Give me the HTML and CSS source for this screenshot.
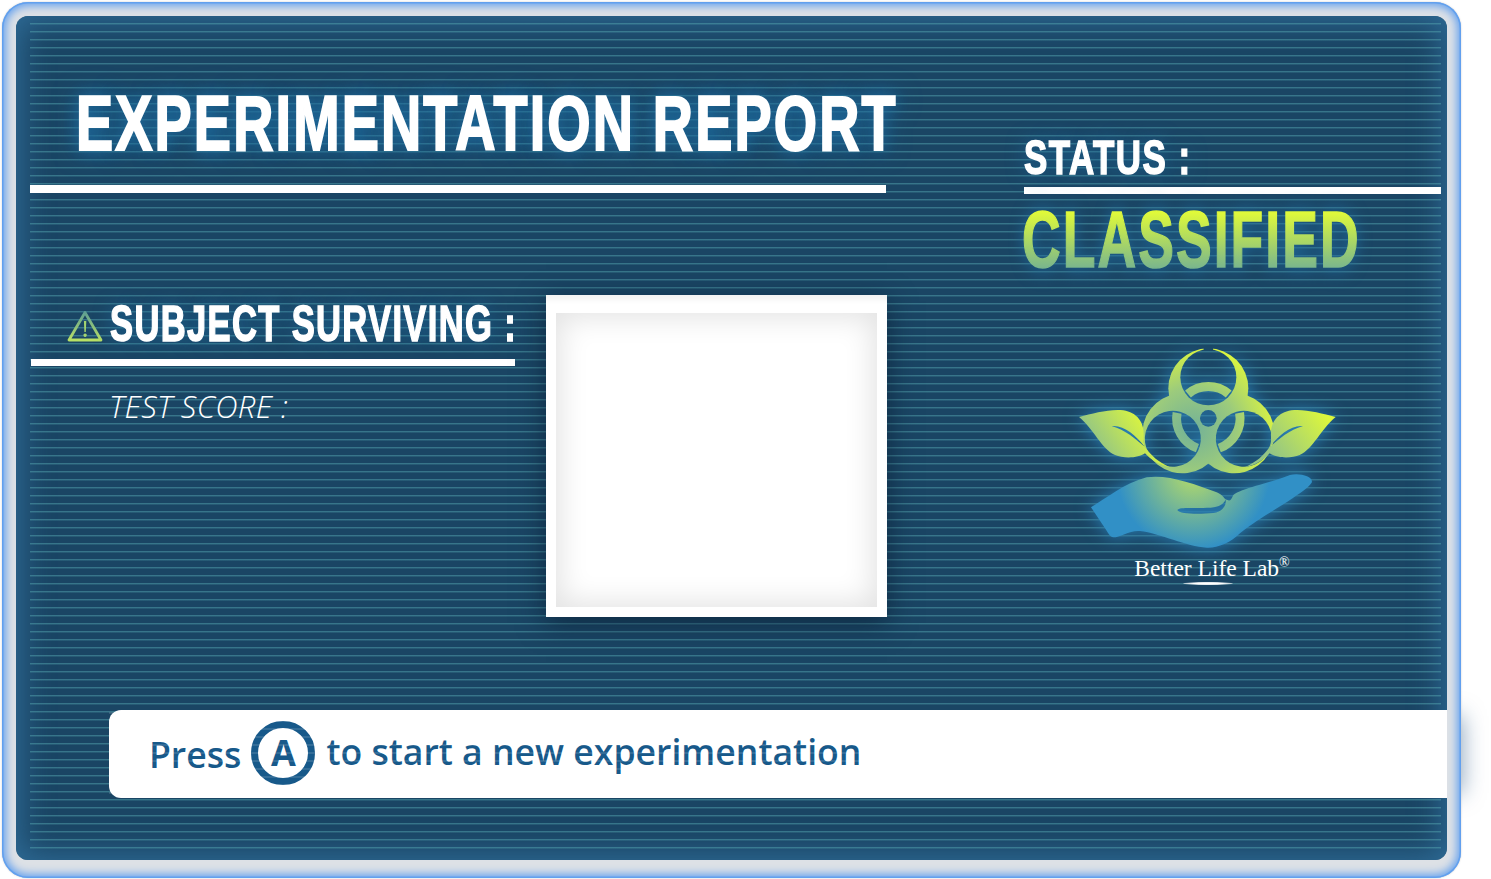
FILE: index.html
```html
<!DOCTYPE html>
<html lang="en">
<head>
<meta charset="utf-8">
<title>Experimentation Report</title>
<link rel="stylesheet" href="styles.css">
</head>
<body>
<div class="frame">
  <div class="panel">
    <div class="columns">
      <section class="left-col">
        <h1 class="title"><span class="squeeze title-text">EXPERIMENTATION REPORT</span></h1>
        <div class="rule title-rule"></div>
        <div class="subject-row">
          <div class="subject">
            <div class="subject-head">
              <svg class="warn" viewBox="0 0 36 32" aria-hidden="true">
                <defs><linearGradient id="warnGrad" x1="0" y1="0" x2="0" y2="1"><stop offset="0" stop-color="#5f9f92"/><stop offset="1" stop-color="#b9e064"/></linearGradient></defs>
                <path d="M18 2.5 L34 30 H2 Z" fill="none" stroke="url(#warnGrad)" stroke-width="2.8" stroke-linejoin="round"/>
                <path d="M16.9 11 H19.3 L18.8 22 H17.4 Z M18.1 23.5 a1.7 1.7 0 1 0 .01 0 Z" fill="#a4d470"/>
              </svg>
              <h2 class="subject-title"><span class="squeeze subject-text">SUBJECT SURVIVING :</span></h2>
            </div>
            <div class="rule subject-rule"></div>
            <p class="score">TEST SCORE :</p>
          </div>
          <div class="photo"><div class="photo-inner"></div></div>
        </div>
      </section>
      <aside class="right-col">
        <div class="status"><span class="squeeze status-text">STATUS :</span></div>
        <div class="rule status-rule"></div>
        <div class="classified"><span class="squeeze classified-text">CLASSIFIED</span></div>
        <div class="logo">
          <svg class="logo-art" viewBox="0 0 870 680" aria-hidden="true">
            <defs>
              <radialGradient id="bioGrad" gradientUnits="userSpaceOnUse" cx="400" cy="300" r="260">
                <stop offset="0" stop-color="#72b198"/><stop offset=".5" stop-color="#9ccb7c"/><stop offset="1" stop-color="#e0f83a"/>
              </radialGradient>
              <linearGradient id="leafL" gradientUnits="userSpaceOnUse" x1="110" y1="350" x2="250" y2="255">
                <stop offset="0" stop-color="#93c585"/><stop offset="1" stop-color="#ddf73c"/>
              </linearGradient>
              <linearGradient id="leafR" gradientUnits="userSpaceOnUse" x1="250" y1="370" x2="90" y2="250">
                <stop offset="0" stop-color="#93c585"/><stop offset="1" stop-color="#ddf73c"/>
              </linearGradient>
              <radialGradient id="handGrad" gradientUnits="userSpaceOnUse" cx="400" cy="430" r="230">
                <stop offset="0" stop-color="#b8dd66"/><stop offset="1" stop-color="#3190c6"/>
              </radialGradient>
              <mask id="bioMask" maskUnits="userSpaceOnUse" x="0" y="0" width="870" height="680">
                <g fill="#fff">
                  <circle cx="445" cy="175" r="120"/>
                  <circle cx="445" cy="175" r="120" transform="rotate(120 445 265)"/>
                  <circle cx="445" cy="175" r="120" transform="rotate(240 445 265)"/>
                </g>
                <g fill="#000">
                  <circle cx="445" cy="142" r="84"/>
                  <circle cx="445" cy="142" r="84" transform="rotate(120 445 265)"/>
                  <circle cx="445" cy="142" r="84" transform="rotate(240 445 265)"/>
                  <circle cx="445" cy="265" r="25"/>
                  <rect x="431" y="50" width="28" height="20"/>
                </g>
                <g fill="none" stroke="#fff" stroke-width="27">
                  <path d="M384 192 A95 95 0 0 1 506 192"/>
                  <path d="M384 192 A95 95 0 0 1 506 192" transform="rotate(120 445 265)"/>
                  <path d="M384 192 A95 95 0 0 1 506 192" transform="rotate(240 445 265)"/>
                </g>
              </mask>
              <mask id="handMask" maskUnits="userSpaceOnUse" x="0" y="400" width="870" height="280">
                <rect x="0" y="400" width="870" height="280" fill="#fff"/>
                <path d="M352 540 C360 529 420 538 462 532 C480 529 492 522 497 508 C500 530 484 547 460 549 C420 553 358 553 352 540 Z" fill="#000"/>
              </mask>
              <mask id="leafMask" maskUnits="userSpaceOnUse" x="0" y="200" width="460" height="240">
                <rect x="0" y="200" width="460" height="240" fill="#fff"/>
                <path d="M155 288 C190 284 228 315 254 350 C226 326 196 300 155 288 Z" fill="#000"/>
              </mask>
            </defs>
            <rect x="0" y="0" width="870" height="680" fill="url(#bioGrad)" mask="url(#bioMask)"/>
            <path mask="url(#leafMask)" fill="url(#leafL)" d="M57 261 C100 250 150 236 190 241 C230 248 254 275 251 320 C250 335 252 345 258 355 C272 375 295 397 330 412 C295 406 272 388 255 370 C235 385 190 386 165 375 C125 358 100 295 57 261 Z"/>
            <g transform="translate(884 0) scale(-1 1)">
              <path mask="url(#leafMask)" fill="url(#leafR)" d="M57 261 C100 250 150 236 190 241 C230 248 254 275 251 320 C250 335 252 345 258 355 C272 375 295 397 330 412 C295 406 272 388 255 370 C235 385 190 386 165 375 C125 358 100 295 57 261 Z"/>
            </g>
            <path mask="url(#handMask)" fill="url(#handGrad)" d="M93 532 C140 505 190 460 260 442 C320 432 400 460 470 487 C488 494 492 506 497 508 C510 515 512 512 520 495 C545 475 620 462 690 435 C720 428 762 440 755 458 C735 490 600 560 540 610 C510 640 470 655 440 653 C380 650 300 610 240 603 C210 600 180 622 160 622 C150 622 145 610 135 595 Z"/>
          </svg>
          <div class="brand">Better Life Lab<sup class="reg">®</sup></div>
          <div class="brand-mark"></div>
        </div>
      </aside>
    </div>
    <div class="bar">
      <span class="press">Press</span>
      <span class="button-a">A</span>
      <span class="bar-text">to start a new experimentation</span>
    </div>
  </div>
</div>
</body>
</html>
```

FILE: styles.css
```css
* { box-sizing: border-box; }
html { margin: 0; padding: 0; background: #fff; }
body { margin: 0; padding: 0; width: 1491px; height: 879px; overflow: hidden; }

.frame {
  position: relative;
  width: 1459px;
  height: 876px;
  margin: 2px 0 0 2px;
  padding: 14px;
  border-radius: 26px;
  background: #dde1e6;
  box-shadow: inset 0 0 0 1.5px #62a0ee, inset 0 0 9px 4px #66a2ee, 0 0 2px #c9c9c9;
}
.frame::before {
  content: "";
  position: absolute;
  z-index: -1;
  top: 715px;
  right: 0;
  width: 20px;
  height: 75px;
  box-shadow: 0 0 22px 1px rgba(20,70,120,.5);
}
.panel {
  position: relative;
  height: 844px;
  width: 1431px;
  padding-left: 14px;
  border-radius: 12px;
  background: #1a4564;
  box-shadow: inset 0 0 30px 6px #2e6b96;
}
.panel::before {
  content: "";
  position: absolute;
  inset: 7px 6px 8px 14px;
  background: repeating-linear-gradient(to bottom, rgba(84,165,175,.5) 0, rgba(84,165,175,.5) 1px, rgba(84,165,175,.22) 1px, rgba(84,165,175,.22) 2px, transparent 2px, transparent 8px);
}
.columns { position: relative; display: flex; }
.left-col { width: 857px; }
.right-col { width: 417px; margin-left: 137px; }

.squeeze {
  display: inline-block;
  font-family: "Liberation Sans", sans-serif;
  font-weight: 700;
  color: #fff;
  white-space: nowrap;
  transform-origin: left center;
}
.title { margin: 67px 0 21px 46px; font-size: 78px; line-height: 80px; font-weight: 700; }
.title-text { letter-spacing: 3px; transform: scaleX(.714); -webkit-text-stroke: 2.2px #fff; text-shadow: 0 0 30px #1f6a9c, 0 0 18px #1f6a9c; }
.rule { height: 8px; background: #fff; }
.title-rule { width: 856px; }

.subject-row { display: flex; margin-top: 102px; gap: 31px; }
.subject { width: 485px; padding-left: 1px; }
.subject-head { display: flex; align-items: flex-start; padding-top: 3px; height: 64px; }
.warn { width: 36px; height: 32px; margin: 12px 7px 0 36px; flex: none; }
.subject-title { margin: 0; font-size: 50px; line-height: 52px; font-weight: 700; }
.subject-text { letter-spacing: 2px; transform: scaleX(.69); -webkit-text-stroke: 1.6px #fff; text-shadow: 0 0 22px #1f6a9c; }
.subject-rule { height: 7px; }
.score {
  margin: 20px 0 0 78px;
  font-family: "Open Sans", sans-serif;
  font-style: italic;
  font-weight: 300;
  font-size: 31px;
  line-height: 40px;
  letter-spacing: .3px;
  color: #fff;
}

.photo {
  display: flex;
  width: 341px;
  height: 322px;
  padding: 18px 10px 10px;
  background: #fff;
  box-shadow: 0 6px 26px rgba(8,28,48,.65), inset 0 8px 5px -3px #f3f3f3;
}
.photo-inner {
  flex: 1;
  background: #fff;
  box-shadow: inset 0 0 28px 5px #e3e3e3;
}

.status { margin-top: 117px; height: 54px; font-size: 48px; line-height: 50px; }
.status-text { letter-spacing: 2px; transform: scaleX(.728); -webkit-text-stroke: 1.5px #fff; text-shadow: 0 0 22px #1f6a9c; }
.status-rule { height: 7px; }
.classified { margin: 6px 0 0 -2px; height: 80px; font-size: 79px; line-height: 80px; }
.classified-text {
  letter-spacing: 3px;
  transform: scaleX(.678);
  background: linear-gradient(to bottom, #e2fb38 14%, #78b58e 86%);
  -webkit-background-clip: text;
  background-clip: text;
  color: transparent;
  -webkit-text-stroke: 1.6px transparent;
  filter: drop-shadow(0 0 10px #1f6a9c);
}

.logo { display: flex; flex-direction: column; align-items: center; width: 290px; margin: 50px 0 0 36px; }
.logo-art { display: block; width: 290px; height: 226.67px; filter: drop-shadow(0 0 9px #2a80b5); }
.brand {
  margin: -2px 0 0 14px;
  font-family: "Liberation Serif", serif;
  font-size: 23.5px;
  line-height: 26px;
  color: #fff;
  white-space: nowrap;
}
.reg { font-size: 14px; line-height: 0; vertical-align: 9px; }
.brand-mark {
  width: 50px;
  height: 3px;
  margin: 1px 0 0 6px;
  border-radius: 50%;
  background: radial-gradient(ellipse at center, #fff 40%, rgba(255,255,255,.1) 100%);
}

.bar {
  position: relative;
  display: flex;
  align-items: center;
  height: 88px;
  margin: 93px 0 0 79px;
  padding: 0 0 2px 40px;
  border-radius: 12px 0 0 12px;
  background: #fff;
  color: #17598a;
  font-family: "Open Sans", sans-serif;
  font-weight: 600;
  font-size: 35.6px;
}
.bar::after {
  content: "";
  position: absolute;
  inset: 2px 0 0 0;
  background: repeating-linear-gradient(to bottom, rgba(255,255,255,.12) 0, rgba(255,255,255,.12) 1.5px, transparent 1.5px, transparent 8px);
}
.press { margin-top: 2px; }
.button-a {
  display: flex;
  align-items: center;
  justify-content: center;
  width: 64px;
  height: 64px;
  margin: 0 11px 0 10px;
  border: 7px solid #17598a;
  border-radius: 50%;
  font-size: 36px;
  font-weight: 700;
  line-height: 1;
}
.bar-text { margin-top: -4px; white-space: nowrap; }
```
